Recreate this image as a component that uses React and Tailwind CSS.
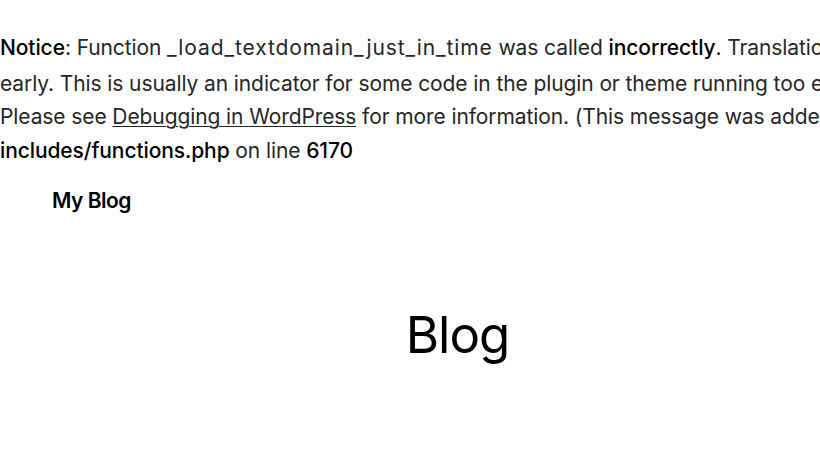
const App = () => {
  return (
    <div
      className="w-[820px] h-[461px] overflow-hidden bg-white text-[#262626]"
      style={{ fontFamily: "Inter, 'Open Sans', sans-serif" }}
    >
      {/* PHP NOTICE */}
      <div className="pt-[31px] text-[21px] leading-[33.7px] whitespace-nowrap tracking-[-0.1px]">
        <div>
          <b className="font-medium text-black">Notice</b>: Function <span className="tracking-[0.9px]">_load_textdomain_just_in_time</span> was called{" "}
          <b className="font-medium text-black">incorrectly</b>. Translation loading for the <code>twentytwentyfour</code> domain was triggered too
        </div>
        <div>
          early. This is usually an indicator for some code in the plugin or theme running too early. Translations should be loaded
        </div>
        <div>
          Please see <a href="#" className="underline underline-offset-2 decoration-1">Debugging in WordPress</a> for more information. (This message was added in version 6.7.0.) in /var/www/html/wp-
        </div>
        <div>
          <b className="font-medium text-black">includes/functions.php</b> on line <b className="font-medium text-black">6170</b>
        </div>
      </div>

      {/* SITE HEADER */}
      <header className="w-[915px] pl-[52px] pt-[17px]">
        <p className="text-[21px] font-semibold tracking-[-0.5px] text-black">My Blog</p>
      </header>

      {/* PAGE TITLE */}
      <main className="w-[915px] flex justify-center pt-[93px]">
        <h1 className="text-[51px] leading-none font-normal text-black tracking-[-1px]">Blog</h1>
      </main>
    </div>
  );
};

export default App;
